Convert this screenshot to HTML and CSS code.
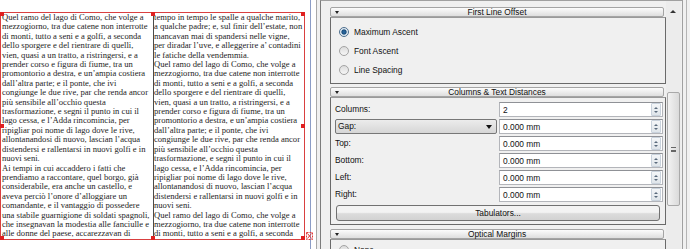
FILE: index.html
```html
<!DOCTYPE html>
<html lang="it">
<head>
  <meta charset="UTF-8"/>
  <title>Text Frame Properties</title>
  <link rel="stylesheet" href="styles.css">
</head>
<body>
<div class="screen">
  <div class="doc">
    <div class="frame">
      <div class="col col_1">
        <p>Quel ramo del lago di Como, che volge a<br>mezzogiorno, tra due catene non interrotte<br>di monti, tutto a seni e a golfi, a seconda<br>dello sporgere e del rientrare di quelli,<br>vien, quasi a un tratto, a ristringersi, e a<br>prender corso e figura di fiume, tra un<br>promontorio a destra, e un’ampia costiera<br>dall’altra parte; e il ponte, che ivi<br>congiunge le due rive, par che renda ancor<br>più sensibile all’occhio questa<br>trasformazione, e segni il punto in cui il<br>lago cessa, e l’Adda rincomincia, per<br>ripigliar poi nome di lago dove le rive,<br>allontanandosi di nuovo, lascian l’acqua<br>distendersi e rallentarsi in nuovi golfi e in<br>nuovi seni.</p>
        <p>Ai tempi in cui accaddero i fatti che<br>prendiamo a raccontare, quel borgo, già<br>considerabile, era anche un castello, e<br>aveva perciò l’onore d’alloggiare un<br>comandante, e il vantaggio di possedere<br>una stabile guarnigione di soldati spagnoli,<br>che insegnavan la modestia alle fanciulle e<br>alle donne del paese, accarezzavan di</p>
      </div>
      <div class="col col_2">
        <p>tempo in tempo le spalle a qualche marito,<br>a qualche padre; e, sul finir dell’estate, non<br>mancavan mai di spandersi nelle vigne,<br>per diradar l’uve, e alleggerire a’ contadini<br>le fatiche della vendemmia.</p>
        <p>Quel ramo del lago di Como, che volge a<br>mezzogiorno, tra due catene non interrotte<br>di monti, tutto a seni e a golfi, a seconda<br>dello sporgere e del rientrare di quelli,<br>vien, quasi a un tratto, a ristringersi, e a<br>prender corso e figura di fiume, tra un<br>promontorio a destra, e un’ampia costiera<br>dall’altra parte; e il ponte, che ivi<br>congiunge le due rive, par che renda ancor<br>più sensibile all’occhio questa<br>trasformazione, e segni il punto in cui il<br>lago cessa, e l’Adda rincomincia, per<br>ripigliar poi nome di lago dove le rive,<br>allontanandosi di nuovo, lascian l’acqua<br>distendersi e rallentarsi in nuovi golfi e in<br>nuovi seni.</p>
        <p>Quel ramo del lago di Como, che volge a<br>mezzogiorno, tra due catene non interrotte<br>di monti, tutto a seni e a golfi, a seconda</p>
      </div>
      <!-- selection handles -->
      <span class="handle h_tl"></span>
      <span class="handle h_tm"></span>
      <span class="handle h_tr"></span>
      <span class="handle h_ml"></span>
      <span class="handle h_mr"></span>
      <span class="handle h_bl"></span>
      <span class="handle h_bm"></span>
      <span class="handle h_br"></span>
      <svg class="overflow" width="7" height="8" viewBox="0 0 7 8">
        <rect x="0.5" y="0.5" width="6" height="7" fill="none" stroke="#e03a3a" stroke-dasharray="2 1"/>
        <path d="M1.5 1.5 L5.5 6.5 M5.5 1.5 L1.5 6.5" stroke="#e03a3a" stroke-width="1"/>
      </svg>
    </div>
  </div>
  <div class="gutter"></div>

  <div class="panel">
    <div class="scroll_area">
      <div class="panel_body">
        <div class="section_head"><span class="tri"></span><span class="title">First Line Offset</span></div>
        <div class="section_box box_1">
          <div class="radio checked"><span class="dot"></span>Maximum Ascent</div>
          <div class="radio"><span class="dot"></span>Font Ascent</div>
          <div class="radio"><span class="dot"></span>Line Spacing</div>
        </div>

        <div class="section_head"><span class="tri"></span><span class="title">Columns &amp; Text Distances</span></div>
        <div class="section_box box_2">
          <div class="form_grid">
            <div class="label">Columns:</div>
            <div class="spin"><span class="val">2</span><span class="spin_btn"><i class="up"></i><i class="down"></i></span></div>
            <div class="combo">Gap:<span class="combo_arrow"></span></div>
            <div class="spin"><span class="val">0.000 mm</span><span class="spin_btn"><i class="up"></i><i class="down"></i></span></div>
            <div class="label">Top:</div>
            <div class="spin"><span class="val">0.000 mm</span><span class="spin_btn"><i class="up"></i><i class="down"></i></span></div>
            <div class="label">Bottom:</div>
            <div class="spin"><span class="val">0.000 mm</span><span class="spin_btn"><i class="up"></i><i class="down"></i></span></div>
            <div class="label">Left:</div>
            <div class="spin"><span class="val">0.000 mm</span><span class="spin_btn"><i class="up"></i><i class="down"></i></span></div>
            <div class="label">Right:</div>
            <div class="spin"><span class="val">0.000 mm</span><span class="spin_btn"><i class="up"></i><i class="down"></i></span></div>
          </div>
          <div class="button">Tabulators...</div>
        </div>

        <div class="section_head"><span class="tri"></span><span class="title">Optical Margins</span></div>
        <div class="section_box box_3">
          <div class="radio"><span class="dot"></span>None</div>
        </div>
      </div>

      <div class="scrollbar">
        <div class="sb_arrow"></div>
        <div class="sb_thumb"><span class="grip"></span></div>
      </div>
    </div>
  </div>
</div>
</body>
</html>
```

FILE: styles.css
```css
body {
    margin: 0;
    width: 690px;
    height: 249px;
    overflow: hidden;
    background-color: #f0f0f0;
    font-family: "Liberation Sans", Arial, sans-serif;
}

.screen {
    display: flex;
    height: 249px;
}

/* document area */
.doc {
    width: 311px;
    height: 249px;
    padding-top: 12px;
    box-sizing: border-box;
    background-color: #fff;
    border-right: 1px solid #8b9cc6;
}

.frame {
    position: relative;
    display: flex;
    width: 303px;
    height: 226px;
    border: 1px solid #d94040;
}

.col {
    overflow: hidden;
    font-family: "Liberation Serif", "Times New Roman", serif;
    font-size: 8.6px;
    line-height: 9.4px;
    color: #1e1e1e;
    white-space: nowrap;
}

.col p {
    margin: 0;
}

.col_1 {
    width: 151px;
    padding-left: 1px;
}

.col_2 {
    width: 150px;
    border-left: 1px solid #4a4a4a;
}

.handle {
    position: absolute;
    width: 4px;
    height: 4px;
    background-color: #e02020;
}

.h_tl { left: -1px; top: -1px; }
.h_tm { left: 150px; top: -1px; }
.h_tr { right: -1px; top: -1px; }
.h_ml { left: -1px; top: 111px; }
.h_mr { right: -1px; top: 111px; }
.h_bl { left: -1px; bottom: -1px; }
.h_bm { left: 150px; bottom: -1px; }
.h_br { right: -1px; bottom: -1px; }

.overflow {
    position: absolute;
    left: 305px;
    top: 219px;
}

.gutter {
    width: 5px;
    background-color: #fff;
}

/* properties panel */
.panel {
    display: flex;
    width: 363px;
    padding: 0 3px;
    border-left: 1px solid #a8a8a8;
    border-right: 1px solid #b4b4b4;
}

.scroll_area {
    display: flex;
    flex: 1;
    border-left: 1px solid #7c7c7c;
    border-right: 1px solid #a0a0a0;
    border-top: 1px solid #a0a0a0;
}

.panel_body {
    width: 345px;
    padding: 6px 0 0 9px;
    box-sizing: border-box;
    font-size: 8.4px;
    color: #111;
}

.section_head {
    position: relative;
    height: 8px;
    margin-right: 2px;
    border: 1px solid #a4a4a4;
    border-radius: 2px;
    background: linear-gradient(#fcfcfc, #dedede);
    text-align: center;
    line-height: 8px;
}

.section_head .tri {
    position: absolute;
    left: 4px;
    top: 3px;
    border-left: 2px solid transparent;
    border-right: 2px solid transparent;
    border-top: 3px solid #222;
}

.section_box {
    border: 1px solid #6a6a6a;
    border-top-color: #9a9a9a;
    box-sizing: border-box;
    background-color: #f0f0f0;
}

.box_1 {
    height: 67px;
    margin-bottom: 3px;
    padding: 7px 0 0 8px;
}

.box_1 .radio + .radio {
    margin-top: 5px;
}

.radio {
    display: flex;
    align-items: center;
    gap: 5px;
    height: 14px;
}

.dot {
    width: 8px;
    height: 8px;
    border: 1px solid #a3a3a3;
    border-radius: 50%;
    background: linear-gradient(#dcdcdc, #f6f6f6);
}

.radio.checked .dot {
    border-color: #4d6f8e;
    background: radial-gradient(circle, #2c6ea8 0, #1d4f7e 2.2px, #cfdde9 3px, #eef3f7 4px);
}

.box_2 {
    height: 128px;
    margin-bottom: 4px;
    padding: 4px 3px 0 4px;
}

.form_grid {
    display: grid;
    grid-template-columns: 162px 164px;
    grid-auto-rows: 15px;
    column-gap: 2px;
    row-gap: 2px;
}

.label {
    line-height: 15px;
}

.spin {
    display: flex;
    align-items: center;
    justify-content: space-between;
    border: 1px solid #b3b5ba;
    border-top-color: #8f9196;
    background-color: #fff;
    padding: 0 1px 0 3px;
}

.spin_btn {
    display: flex;
    flex-direction: column;
    align-items: center;
    justify-content: center;
    gap: 2px;
    width: 8px;
    height: 11px;
    border: 1px solid #c9d2dc;
    border-radius: 1px;
    background: linear-gradient(#f4f6f8, #dfe5ea);
}

.spin_btn i {
    border-left: 2px solid transparent;
    border-right: 2px solid transparent;
}

.spin_btn .up {
    border-bottom: 2px solid #5a6a7c;
}

.spin_btn .down {
    border-top: 2px solid #5a6a7c;
}

.combo {
    position: relative;
    border: 1px solid #777;
    border-radius: 2px;
    background: linear-gradient(#ececec, #d6d6d6);
    padding-left: 2px;
    line-height: 13px;
}

.combo_arrow {
    position: absolute;
    right: 4px;
    top: 5px;
    border-left: 3px solid transparent;
    border-right: 3px solid transparent;
    border-top: 4px solid #111;
}

.button {
    margin: 3px 2px 0 1px;
    height: 14px;
    border: 1px solid #717171;
    border-radius: 3px;
    background: linear-gradient(#f3f3f3 45%, #dcdcdc 55%, #d2d2d2);
    text-align: center;
    line-height: 14px;
}

.box_3 {
    height: 20px;
    padding: 3px 0 0 8px;
}

/* scrollbar */
.scrollbar {
    width: 15px;
    background-color: #ececec;
}

.sb_arrow {
    position: relative;
    height: 17px;
}

.sb_arrow::after {
    content: "";
    position: absolute;
    left: 4px;
    top: 9px;
    border-left: 3px solid transparent;
    border-right: 3px solid transparent;
    border-bottom: 3px solid #333;
}

.sb_thumb {
    display: flex;
    align-items: center;
    justify-content: center;
    height: 112px;
    margin: 74px 1px 0 1px;
    border: 1px solid #a9a9a9;
    border-radius: 2px;
    background: linear-gradient(to right, #f2f2f2, #dadada);
}

.grip {
    width: 5px;
    height: 5px;
    border-top: 1px solid #666;
    border-bottom: 1px solid #666;
    background: linear-gradient(transparent 2px, #666 2px, #666 3px, transparent 3px);
    box-sizing: border-box;
}
```
